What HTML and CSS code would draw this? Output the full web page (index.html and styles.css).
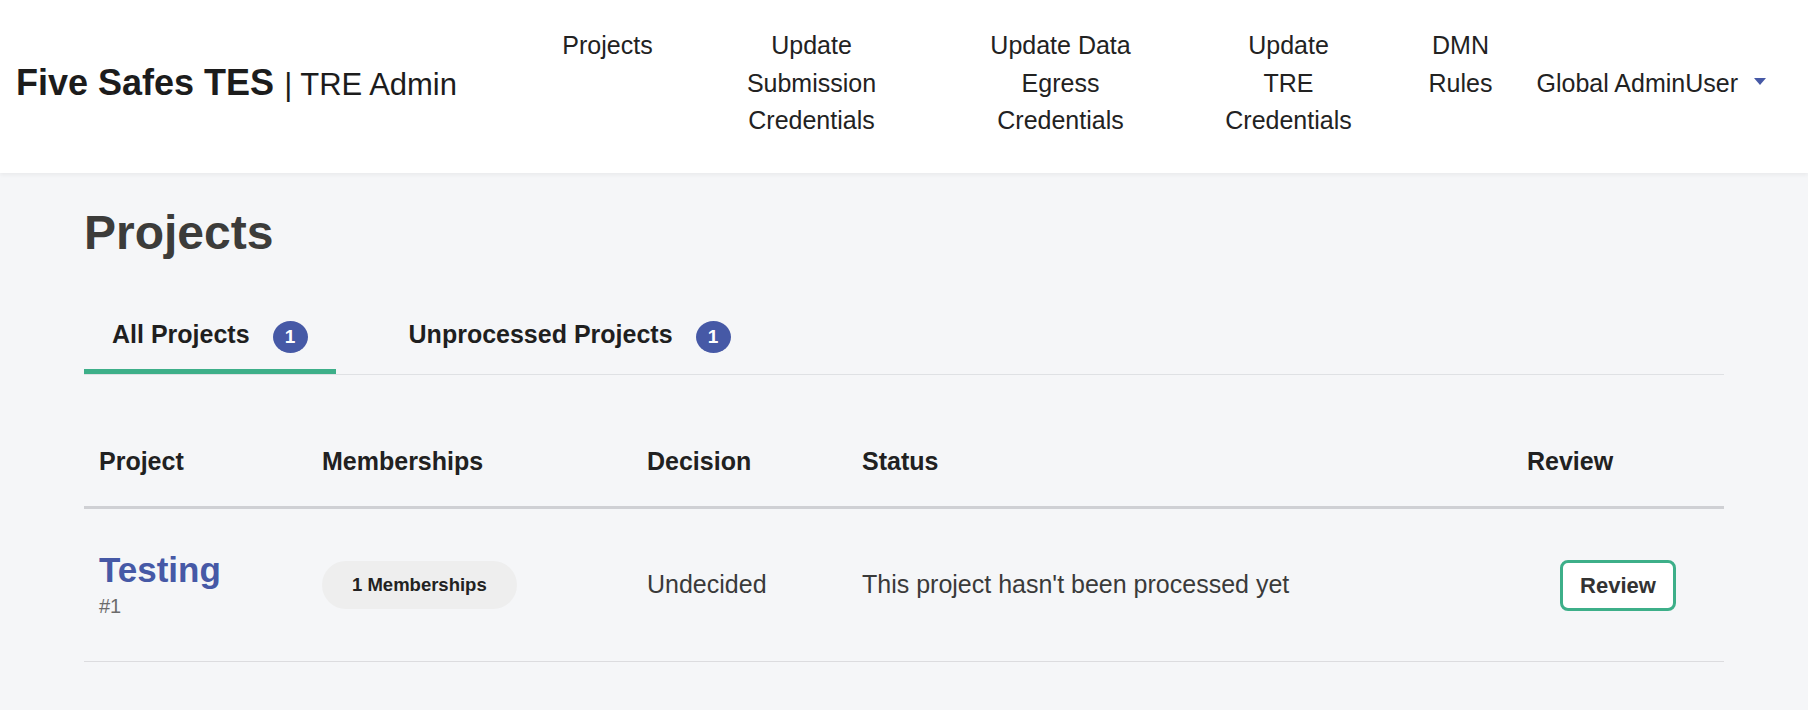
FILE: index.html
```html
<!DOCTYPE html>
<html lang="en">
<head>
    <meta charset="UTF-8">
    <meta name="viewport" content="width=device-width, initial-scale=1.0">
    <title>Projects - Five Safes TES</title>
    <link rel="stylesheet" href="styles.css">
</head>
<body>
    <header class="topbar">
        <a class="brand" href="#">Five Safes TES <span class="brand-sub">| TRE Admin</span></a>
        <nav class="main-nav">
            <a class="nav-link" href="#">Projects</a>
            <a class="nav-link" href="#">Update<br>Submission<br>Credentials</a>
            <a class="nav-link" href="#">Update Data<br>Egress<br>Credentials</a>
            <a class="nav-link" href="#">Update<br>TRE<br>Credentials</a>
            <a class="nav-link" href="#">DMN<br>Rules</a>
        </nav>
        <div class="user-menu">
            <span>Global AdminUser</span>
            <span class="caret"></span>
        </div>
    </header>

    <main class="page">
        <h1>Projects</h1>

        <div class="tabs">
            <a class="tab active" href="#">All Projects <span class="badge">1</span></a>
            <a class="tab" href="#">Unprocessed Projects <span class="badge">1</span></a>
        </div>

        <table class="project-table">
            <thead>
                <tr>
                    <th class="col-project">Project</th>
                    <th class="col-members">Memberships</th>
                    <th class="col-decision">Decision</th>
                    <th class="col-status">Status</th>
                    <th class="col-review">Review</th>
                </tr>
            </thead>
            <tbody>
                <tr>
                    <td>
                        <a class="project-name" href="#">Testing</a>
                        <span class="project-id">#1</span>
                    </td>
                    <td><span class="pill">1 Memberships</span></td>
                    <td>Undecided</td>
                    <td>This project hasn't been processed yet</td>
                    <td class="review-cell"><button class="btn-review" type="button">Review</button></td>
                </tr>
            </tbody>
        </table>
    </main>
</body>
</html>
```

FILE: styles.css
```css
* {
    box-sizing: border-box;
}

body {
    margin: 0;
    font-family: "Liberation Sans", Arial, sans-serif;
    background-color: #f5f6f8;
    color: #222;
}

a {
    text-decoration: none;
}

/* top navigation bar */
.topbar {
    display: flex;
    align-items: center;
    background-color: #fff;
    padding: 27px 42px 33px 16px;
    box-shadow: 0 2px 4px rgba(0, 0, 0, 0.05);
}

.brand {
    font-size: 36px;
    font-weight: bold;
    color: #1c1c1c;
    white-space: nowrap;
}

.brand-sub {
    font-size: 31px;
    font-weight: normal;
}

.main-nav {
    margin-left: auto;
    display: grid;
    grid-template-columns: 150px 258px 240px 216px 128px;
    text-align: center;
    font-size: 25px;
    line-height: 1.5;
}

.nav-link {
    color: #222;
}

.user-menu {
    display: flex;
    align-items: center;
    gap: 16px;
    margin-left: 12px;
    font-size: 25px;
    line-height: 1.5;
    color: #222;
    white-space: nowrap;
}

.caret {
    width: 0;
    height: 0;
    border-top: 7px solid #4659a6;
    border-left: 6.5px solid transparent;
    border-right: 6.5px solid transparent;
    margin-top: -4px;
}

/* page body */
.page {
    max-width: 1640px;
    margin: 0 auto;
}

h1 {
    margin: 31px 0 0;
    font-size: 48px;
    line-height: 1.2;
    color: #3c3c3a;
}

.tabs {
    display: flex;
    margin-top: 40px;
    border-bottom: 1px solid #dfe1e4;
}

.tab {
    display: flex;
    align-items: center;
    gap: 23px;
    padding: 15px 28px;
    margin-right: 45px;
    font-size: 25px;
    font-weight: bold;
    line-height: 1.5;
    color: #1f1f1f;
    border-bottom: 5px solid transparent;
}

.tab.active {
    border-bottom-color: #3daf89;
}

.badge {
    display: flex;
    align-items: center;
    justify-content: center;
    width: 35px;
    height: 32px;
    border-radius: 50%;
    background-color: #4659a6;
    color: #fff;
    font-size: 19px;
    line-height: 1;
    margin-top: 4px;
}

/* projects table */
.project-table {
    width: 100%;
    margin-top: 42px;
    border-collapse: separate;
    border-spacing: 0;
    table-layout: fixed;
}

.project-table th {
    text-align: left;
    font-size: 25px;
    line-height: 1.5;
    padding: 26px 15px;
    color: #212121;
    border-bottom: 3px solid #cfd0d4;
}

.col-project { width: 223px; }
.col-members { width: 325px; }
.col-decision { width: 215px; }
.col-status { width: 665px; }
.col-review { width: 212px; }

.project-table td {
    padding: 40px 15px;
    font-size: 25px;
    line-height: 1.5;
    color: #3a3a3a;
    vertical-align: middle;
    border-bottom: 1px solid #dcdcdf;
}

.project-name {
    display: block;
    font-size: 35px;
    font-weight: bold;
    line-height: 1.2;
    color: #4659a6;
}

.project-id {
    display: block;
    font-size: 20px;
    line-height: 1.5;
    color: #6b6b6b;
}

.pill {
    display: inline-block;
    padding: 13px 30px;
    border-radius: 24px;
    background-color: #eeeeee;
    font-size: 18.5px;
    font-weight: bold;
    line-height: 22px;
    color: #222;
}

.review-cell {
    text-align: center;
}

.btn-review {
    font-family: "Liberation Sans", Arial, sans-serif;
    font-size: 22px;
    font-weight: bold;
    line-height: 1.5;
    padding: 6px 17px;
    border: 3px solid #3daf89;
    border-radius: 8px;
    background-color: #fff;
    color: #333;
    cursor: pointer;
}
```
